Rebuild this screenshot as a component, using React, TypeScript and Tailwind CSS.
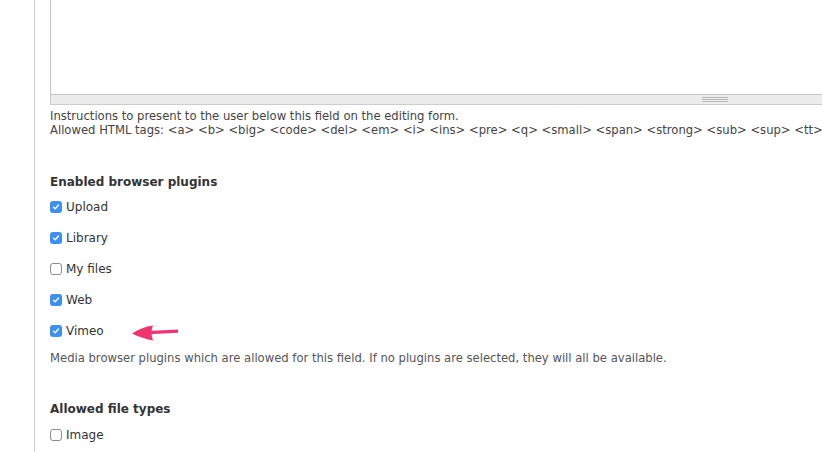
const plugins = [
  { label: 'Upload', checked: true },
  { label: 'Library', checked: true },
  { label: 'My files', checked: false },
  { label: 'Web', checked: true },
  { label: 'Vimeo', checked: true },
];

function Box({ checked }: { checked: boolean }) {
  if (checked) {
    return (
      <span className="flex h-[12px] w-[12px] shrink-0 items-center justify-center rounded-[3px] bg-[#3b8ff5]">
        <svg width="8" height="8" viewBox="0 0 8 8">
          <path d="M1.5 4.2 L3.2 5.8 L6.5 2" fill="none" stroke="white" strokeWidth="1.4" strokeLinecap="round" strokeLinejoin="round" />
        </svg>
      </span>
    );
  }
  return <span className="h-[12px] w-[12px] shrink-0 rounded-[3px] border border-[#8f8f8f] bg-white" />;
}

function Check({ label, checked }: { label: string; checked: boolean }) {
  return (
    <div className="flex h-[16px] items-center gap-[4px] text-[12px] text-[#333]">
      <Box checked={checked} />
      <span>{label}</span>
    </div>
  );
}

export default function App() {
  return (
    <div
      className="relative h-[452px] w-[822px] overflow-hidden bg-white"
      style={{ fontFamily: '"DejaVu Sans", "Lucida Grande", sans-serif' }}
    >
      <div className="ml-[34px] h-full border-l border-[#cfcfcf] pl-[15px]">
        {/* textarea */}
        <div className="w-[1330px]">
          <div className="h-[95px] border-x border-b border-[#c4c4c4] bg-white" />
          <div className="flex h-[10px] items-center justify-center border-x border-b border-[#cdcdcd] bg-[#ececec]">
            <div className="flex flex-col gap-[1px]">
              <span className="block h-px w-[26px] bg-[#b8b8b8]" />
              <span className="block h-px w-[26px] bg-[#b8b8b8]" />
              <span className="block h-px w-[26px] bg-[#b8b8b8]" />
            </div>
          </div>
        </div>

        <div className="mt-[4px] whitespace-nowrap text-[11.6px] leading-[14px] text-[#444]">
          <p>Instructions to present to the user below this field on the editing form.</p>
          <p>
            Allowed HTML tags: &lt;a&gt; &lt;b&gt; &lt;big&gt; &lt;code&gt; &lt;del&gt; &lt;em&gt; &lt;i&gt;
            &lt;ins&gt; &lt;pre&gt; &lt;q&gt; &lt;small&gt; &lt;span&gt; &lt;strong&gt; &lt;sub&gt; &lt;sup&gt;
            &lt;tt&gt;
          </p>
        </div>

        <h3 className="mt-[37px] text-[12px] font-bold leading-[16px] text-[#333]">Enabled browser plugins</h3>
        <div className="mt-[9px] flex flex-col gap-[15px]">
          {plugins.map((p) => (
            <Check key={p.label} label={p.label} checked={p.checked} />
          ))}
        </div>
        <p className="mt-[12px] text-[11.6px] leading-[14px] text-[#555]">
          Media browser plugins which are allowed for this field. If no plugins are selected, they will all be available.
        </p>

        <h3 className="mt-[36px] text-[12px] font-bold leading-[16px] text-[#333]">Allowed file types</h3>
        <div className="mt-[10px]">
          <Check label="Image" checked={false} />
        </div>
      </div>

      {/* annotation arrow */}
      <svg className="absolute left-[130px] top-[320px]" width="52" height="24" viewBox="0 0 52 24">
        <path d="M18 11 L48 9.6 L48 12.8 L18 14.2 Z" fill="#f2336f" />
        <path d="M2 13.5 C8 9.5 15 6.5 23 5.5 C21 9.5 21 15 23 20.5 C15 19 8 16.5 2 13.5 Z" fill="#f2336f" />
      </svg>
    </div>
  );
}
